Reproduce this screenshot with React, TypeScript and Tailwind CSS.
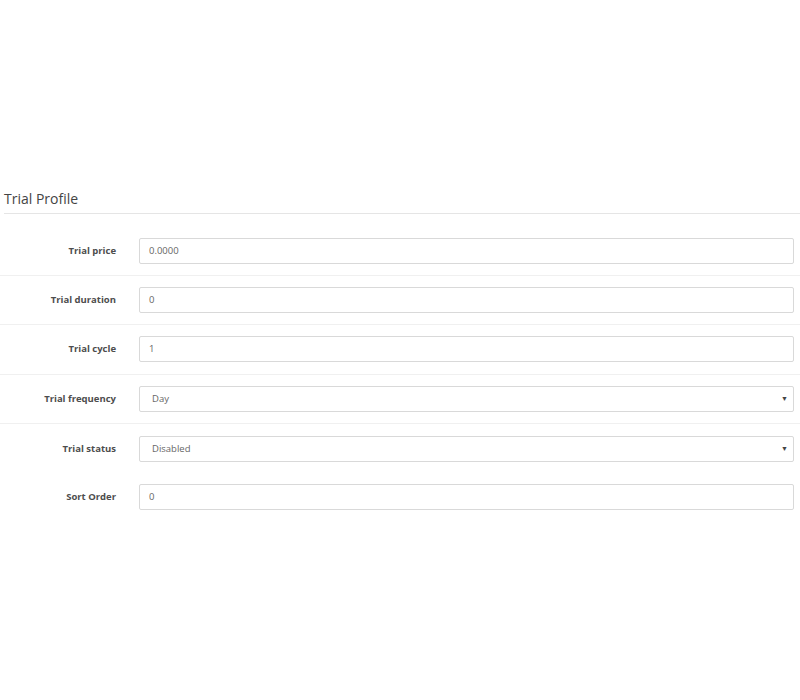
import React from "react";

type Row = { label: string; value: string; select?: boolean; cls: string };

const rows: Row[] = [
  { label: "Trial price", value: "0.0000", cls: "pt-[11px] pb-[11px]" },
  { label: "Trial duration", value: "0", cls: "border-t border-[#f0f0f0] pt-[11px] pb-[11px]" },
  { label: "Trial cycle", value: "1", cls: "border-t border-[#f0f0f0] pt-[11px] pb-[12px]" },
  { label: "Trial frequency", value: "Day", select: true, cls: "border-t border-[#f0f0f0] pt-[11px] pb-[11px]" },
  { label: "Trial status", value: "Disabled", select: true, cls: "border-t border-[#f0f0f0] pt-[12px] pb-[11px]" },
  { label: "Sort Order", value: "0", cls: "pt-[11px] pb-[11px]" },
];

export default function App() {
  return (
    <div
      className="w-[800px] h-[700px] bg-white pt-[189px]"
      style={{ fontFamily: '"Open Sans", sans-serif' }}
    >
      <div className="ml-[4px] border-b border-[#e5e5e5] pb-[4px]">
        <div className="text-[14px] leading-[20px] text-[#444]">Trial Profile</div>
      </div>
      <div className="pt-[13px]">
        {rows.map((r, i) => (
          <div key={i} className={`flex items-center ${r.cls}`}>
            <div className="w-[116px] shrink-0 text-right text-[9.5px] font-bold text-[#4d4d4d]">
              {r.label}
            </div>
            <div className="ml-[23px] mr-[6px] flex-1 h-[26px] rounded-[2px] border border-[#d9d9d9] bg-white flex items-center justify-between">
              <span className={`text-[9.5px] text-[#666] ${r.select ? "pl-[12px]" : "pl-[9px]"}`}>
                {r.value}
              </span>
              {r.select && (
                <span className="pr-[5px] text-[7px] text-[#444]">▼</span>
              )}
            </div>
          </div>
        ))}
      </div>
    </div>
  );
}
